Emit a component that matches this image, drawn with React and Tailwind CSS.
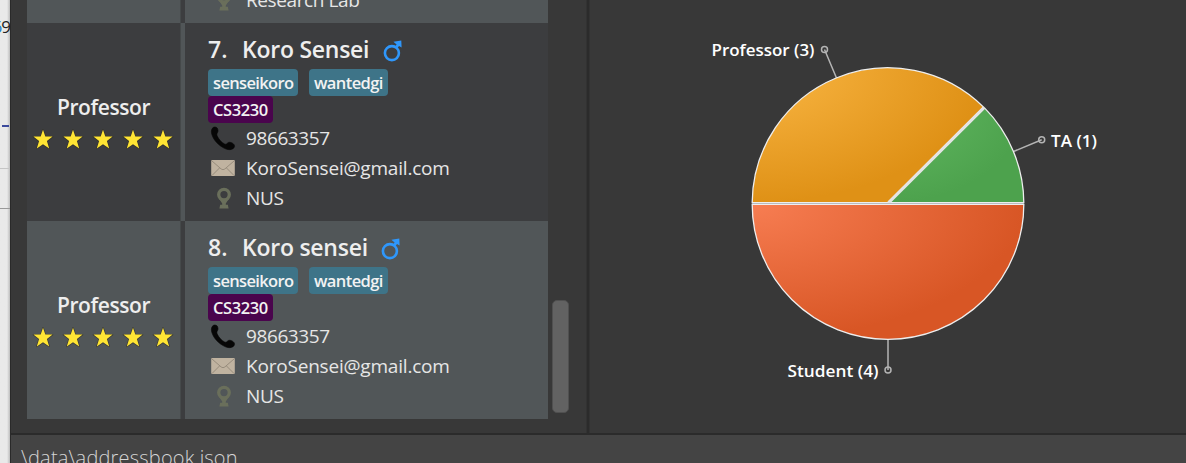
const font = "font-['Open_Sans','Noto_Sans',sans-serif]";

function Star() {
  return (
    <svg width="30" height="30" viewBox="0 0 30 30" className="shrink-0">
      <path
        d="M15 4.8 L17.3 11.6 L24.6 11.6 L18.9 16 L21.2 23.4 L15 19.3 L8.8 23.4 L11.1 16 L5.4 11.6 L12.7 11.6 Z"
        fill="#ffe534"
        stroke="#2e2c20"
        strokeOpacity="0.6"
        strokeWidth="1.4"
        paintOrder="stroke"
        strokeLinejoin="round"
      />
    </svg>
  );
}

function Phone() {
  return (
    <svg width="30" height="30" viewBox="0 -1 30 30">
      <path
        d="M4.2 4.5 C5.5 2.6 8 2.6 9.2 4 C10.3 6 10.2 7.6 9.4 8.8 C8.8 9.7 8.7 10.8 9.2 12 C10.7 15.2 13.3 18.3 16.6 20 C17.6 20.4 18.5 20.3 19.4 19.2 C20.6 17.9 22.5 18 24.5 19.2 C27 20.7 27 22.6 25.6 24.2 C23.6 26 20.5 26.1 17.5 24.8 C11 22 5.6 16.5 3.8 10.3 C3.2 8 3.2 6.1 4.2 4.5 Z"
        fill="#060606"
        stroke="#060606"
        strokeWidth="0.6"
      />
    </svg>
  );
}

function Mail() {
  return (
    <svg width="30" height="30" viewBox="0 0 30 30">
      <rect x="3.2" y="7" width="23.6" height="16" rx="1" fill="#c0b3a0" />
      <path d="M4 8 L13.2 16 Q15 17.4 16.8 16 L26 8 M4 22.5 L11.5 15 M26 22.5 L18.5 15" fill="none" stroke="#978c7c" strokeWidth="1" />
    </svg>
  );
}

function Pin() {
  return (
    <svg width="30" height="30" viewBox="0 0 30 30">
      <circle cx="16" cy="11.6" r="5.3" fill="none" stroke="#6a6f5b" strokeWidth="3.3" />
      <path d="M11 15.5 L14.2 20.4 V22.5 H17.8 V20.4 L21 15.5 L18.5 16.6 H13.5 Z" fill="#6a6f5b" />
      <path d="M12.2 21.8 H19.8 L20.6 25.6 H11.4 Z" fill="#6a6f5b" />
    </svg>
  );
}

function Male() {
  return (
    <svg width="20" height="26" viewBox="0 -1 20 26" className="shrink-0">
      <circle cx="8.9" cy="16.1" r="7" fill="none" stroke="#2f97fb" strokeWidth="2.6" />
      <path d="M12.2 9.6 L13.6 7.4 L10.4 4.8 L18.3 3.6 L18.6 10.6 L16 9 L14.6 11 Z" fill="#2f97fb" />
    </svg>
  );
}

function Tag({ children, className }) {
  return (
    <span className={`flex h-[27px] items-center rounded-[4px] pt-[2px] pl-[5px] font-semibold whitespace-nowrap text-[#f2f2f2] ${className}`}>
      {children}
    </span>
  );
}

function Field({ icon, children, className = "" }) {
  return (
    <div className="flex h-[30px] items-center gap-[8px]">
      {icon}
      <span className={`text-[19px] leading-[30px] whitespace-nowrap text-[#e6e6e6] ${className}`}>{children}</span>
    </div>
  );
}

function PersonCard({ index, name, nameClass, bg, divider }) {
  return (
    <div className={`flex h-[198px] ${bg}`}>
      <div className="w-[153px] pt-[70px]">
        <div className="flex h-[30px] items-center justify-center text-[21px] font-semibold tracking-[-0.4px]">Professor</div>
        <div className="mt-[2px] -ml-px flex h-[30px] justify-center">
          <Star /><Star /><Star /><Star /><Star />
        </div>
      </div>
      <div className={`w-[5px] ${divider}`} />
      <div className="flex-1 pt-[6px] pl-[23px]">
        <div className="flex h-[40px] items-center text-[23px] font-semibold">
          <span className="w-[34px] shrink-0">{index}.</span>
          <span className={`shrink-0 tracking-[-0.25px] whitespace-nowrap ${nameClass}`}>{name}</span>
          <Male />
        </div>
        <div className="flex gap-[11px]">
          <Tag className="w-[90px] bg-[#3e7488] text-[16.5px] tracking-[-0.65px]">senseikoro</Tag>
          <Tag className="w-[79px] bg-[#3e7488] text-[16.5px] tracking-[-0.6px]">wantedgi</Tag>
        </div>
        <Tag className="w-[65px] bg-[#4a044d] text-[16.5px] tracking-[-0.4px]">CS3230</Tag>
        <Field icon={<Phone />} className="tracking-[-0.4px]">98663357</Field>
        <Field icon={<Mail />} className="tracking-[-0.2px]">KoroSensei@gmail.com</Field>
        <Field icon={<Pin />} className="tracking-[-0.3px]">NUS</Field>
      </div>
    </div>
  );
}

function PieChart() {
  return (
    <svg width="596" height="433" viewBox="590 0 596 433" className={font}>
      <defs>
        <radialGradient id="orange" cx="0" cy="0" r="1">
          <stop offset="0" stopColor="#fab745" /><stop offset="1" stopColor="#df9116" />
        </radialGradient>
        <radialGradient id="green" cx="0" cy="0" r="1">
          <stop offset="0" stopColor="#62b962" /><stop offset="1" stopColor="#4da24d" />
        </radialGradient>
        <radialGradient id="red" cx="0" cy="0" r="1">
          <stop offset="0" stopColor="#f77d52" /><stop offset="1" stopColor="#d85625" />
        </radialGradient>
      </defs>
      <g stroke="#b4b4b4" strokeWidth="1.5" fill="none">
        <path d="M836.5 78 L824.5 49.5 M1013.5 151.5 L1041.7 139.7 M888 339 V370" />
        <circle cx="824.5" cy="49.5" r="3" />
        <circle cx="1041.7" cy="139.7" r="3" />
        <circle cx="888" cy="370" r="3" />
      </g>
      <g stroke="#eeeeee" strokeWidth="1.3">
        <path d="M888 202.6 H752.2 A135.8 135.8 0 0 1 983.6 107.1 Z" fill="url(#orange)" />
        <path d="M888.8 202.6 L984.5 107.9 A135.8 135.8 0 0 1 1023.8 202.6 Z" fill="url(#green)" />
        <path d="M752.2 204.4 H1023.8 A135.8 135 0 0 1 752.2 204.4 Z" fill="url(#red)" />
      </g>
      <path d="M888.6 202.6 L984 107.7" stroke="#e4e4e4" strokeWidth="3.2" />
      <path d="M752 203.5 H1024" stroke="#b9bcc0" strokeWidth="1" />
      <g fill="#ffffff" fontSize="17" fontWeight="600">
        <text x="711.5" y="56" textLength="103" lengthAdjust="spacingAndGlyphs">Professor (3)</text>
        <text x="1051" y="147" textLength="46" lengthAdjust="spacingAndGlyphs">TA (1)</text>
        <text x="787.5" y="377" textLength="91" lengthAdjust="spacingAndGlyphs">Student (4)</text>
      </g>
    </svg>
  );
}

export default function App() {
  return (
    <div className={`flex h-[463px] w-[1186px] overflow-hidden bg-[#383838] text-[#eeeeee] ${font}`}>
      <div className="flex h-full w-[10px] shrink-0 flex-col overflow-hidden bg-linear-to-r from-[#e9e9e9] from-70% to-[#bdbdbd] text-[#222222]">
        <div className="flex h-[40px] shrink-0 items-end justify-end text-[17px] leading-[26px] tracking-[-1px]"><span className="text-[#1979ca]">6</span>9</div>
        <div className="mt-[85px] ml-[2px] h-[2px] w-[7px] shrink-0 bg-[#3c4a9c]" />
        <div className="mt-[41px] h-px shrink-0 bg-[#c5c5c5]" />
        <div className="mt-[39px] h-px shrink-0 bg-[#999999]" />
      </div>
      <div className="flex h-full flex-1 flex-col border-l border-[#2a2a2a]">
        <div className="flex h-[433px] shrink-0">
          <div className="ml-[16px] h-[419px] w-[521px] shrink-0 overflow-hidden">
            <div className="flex h-[23px] overflow-hidden bg-[#515658]">
              <div className="w-[153px]" />
              <div className="w-[5px] border-l border-[#45494a] bg-[#3c3d3f]" />
              <div className="-mt-[15px] pl-[23px]">
                <Field icon={<Pin />} className="tracking-[-0.4px]">Research Lab</Field>
              </div>
            </div>
            <PersonCard index={7} name="Koro Sensei" nameClass="w-[141px]" bg="bg-[#3c3d3f]" divider="border-l border-[#45494a] bg-[#515658]" />
            <PersonCard index={8} name="Koro sensei" nameClass="w-[139px]" bg="bg-[#515658]" divider="border-l border-[#45494a] bg-[#3c3d3f]" />
          </div>
          <div className="w-[38px] shrink-0 pt-[300px] pl-[4px]">
            <div className="h-[113px] w-[17px] rounded-[5px] border border-[#505050] bg-[#626262]" />
          </div>
          <div className="w-[4px] shrink-0 border-x border-[#323232] bg-[#2b2b2b]" />
          <PieChart />
        </div>
        <div className="h-[30px] border-t-2 border-[#2b2b2b] bg-[#444444] pt-[8px] pl-[10px] text-[20px] leading-[30px] font-light tracking-[0.2px] whitespace-nowrap text-[#d5d5d5]">
          \data\addressbook.json
        </div>
      </div>
    </div>
  );
}
